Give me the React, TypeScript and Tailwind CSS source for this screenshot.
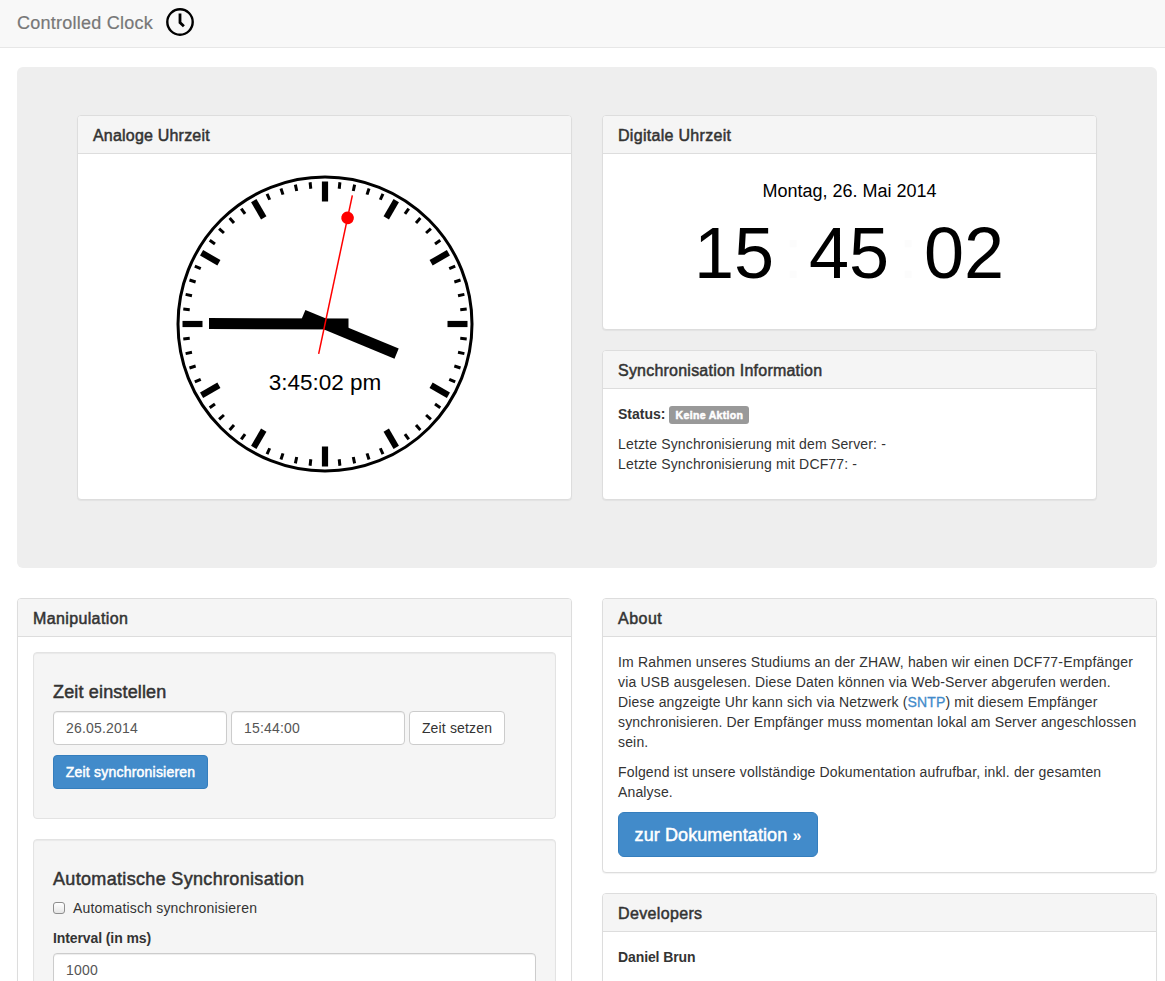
import type { ReactNode } from "react";

const MEDIUM = "[-webkit-text-stroke:0.5px_currentColor]";

function Panel({ title, tracking, className = "", children }: { title: string; tracking: string; className?: string; children: ReactNode }) {
  return (
    <section className={`flex flex-col rounded border border-[#ddd] bg-white shadow-[0_1px_1px_rgba(0,0,0,0.05)] ${className}`}>
      <header className="h-[38px] shrink-0 rounded-t-[3px] border-b border-[#ddd] bg-[#f5f5f5] px-[15px]">
        <h3 className={`text-base leading-[39px] ${MEDIUM} ${tracking}`}>{title}</h3>
      </header>
      {children}
    </section>
  );
}

function AnalogClock() {
  const ticks = Array.from({ length: 60 }, (_, i) => i);
  return (
    <svg className="tracking-normal" width="300" height="300" viewBox="-150 -150 300 300">
      <circle r="147" fill="#fff" stroke="#000" strokeWidth="3" />
      {ticks.map((i) => (
        <line
          key={i}
          y1={-142.5}
          y2={i % 5 === 0 ? -122.5 : -136}
          stroke="#000"
          strokeWidth={i % 5 === 0 ? 6.2 : 3}
          transform={`rotate(${i * 6})`}
        />
      ))}
      <text y="65.5" textAnchor="middle" fontSize="22.5" fill="#000">3:45:02 pm</text>
      <line y1="23.5" y2="-77.5" stroke="#000" strokeWidth="11" transform="rotate(112.5)" />
      <line y1="23.5" y2="-116" stroke="#000" strokeWidth="11" transform="rotate(270.2)" />
      <g transform="rotate(12)">
        <line y1="30.5" y2="-131.5" stroke="#f00" strokeWidth="1.5" />
        <circle cy="-108.5" r="6.3" fill="#f00" />
      </g>
    </svg>
  );
}

function Field({ value, className }: { value: string; className: string }) {
  return (
    <input
      readOnly
      value={value}
      className={`h-[34px] rounded border border-[#ccc] bg-white px-3 text-sm tracking-[0.18px] text-[#555] shadow-[inset_0_1px_1px_rgba(0,0,0,0.075)] outline-none ${className}`}
    />
  );
}

const WELL = "rounded border border-[#e3e3e3] bg-[#f5f5f5] px-[19px] pt-[19px] shadow-[inset_0_1px_1px_rgba(0,0,0,0.05)]";

export default function App() {
  return (
    <div className="h-[981px] w-[1165px] overflow-hidden bg-white font-['Liberation_Sans',Arial,sans-serif] text-sm leading-5 tracking-[0.16px] text-[#333]">
      <nav className="flex h-12 items-start border-b border-[#e7e7e7] bg-[#f8f8f8] pl-[17px]">
        <span className="w-[149px] whitespace-nowrap text-lg leading-[46px] tracking-[0.25px] text-[#777] [-webkit-text-stroke:0.2px_#777]">Controlled Clock</span>
        <svg className="mt-2" width="28" height="28" viewBox="0 0 28 28" fill="none" stroke="#000">
          <circle cx="14" cy="14" r="12.7" strokeWidth="2.4" />
          <path d="M14 5.5V14.6L17.9 18.3" strokeWidth="2.8" />
        </svg>
      </nav>

      <main className="pl-[17px] pr-2 pt-[19px]">
        <div className="flex h-[501px] gap-[30px] rounded-md bg-[#eee] px-[60px] pt-12">
          <Panel title="Analoge Uhrzeit" tracking="tracking-[0.2px]" className="h-[385px] w-[495px]">
            <div className="flex justify-center pt-5">
              <AnalogClock />
            </div>
          </Panel>
          <div className="flex w-[495px] flex-col gap-5">
            <Panel title="Digitale Uhrzeit" tracking="tracking-[0.3px]" className="h-[215px]">
              <div className="pt-[25px] text-center text-lg leading-6 tracking-normal text-black">Montag, 26. Mai 2014</div>
              <div className="flex pl-[91px] pt-[14px] text-[72px] leading-[72px] tracking-normal text-black">
                <span className="w-[89px]">15</span>
                <span className="w-[26px] text-[#fcfcfc]">:</span>
                <span className="w-[89px]">45</span>
                <span className="w-[26px] text-[#fcfcfc]">:</span>
                <span>02</span>
              </div>
            </Panel>
            <Panel title="Synchronisation Information" tracking="tracking-[0.22px]" className="h-[150px]">
              <div className="px-[15px] pt-[15px]">
                <p className="flex items-center gap-1">
                  <b className="tracking-normal">Status:</b>
                  <span className="mt-px flex h-[18px] w-20 items-center justify-center rounded-[3px] bg-[#999] text-[10.5px] font-bold tracking-[0.33px] text-white [-webkit-text-stroke:0.5px_#fff]">
                    Keine Aktion
                  </span>
                </p>
                <p className="mt-2.5">
                  Letzte Synchronisierung mit dem Server: -<br />
                  Letzte Synchronisierung mit DCF77: -
                </p>
              </div>
            </Panel>
          </div>
        </div>

        <div className="mt-[30px] flex items-start gap-[30px]">
          <Panel title="Manipulation" tracking="tracking-[0.37px]" className="w-[555px]">
            <div className="px-[15px] pt-[15px]">
              <div className={`h-[167px] ${WELL}`}>
                <h4 className={`mt-2.5 text-lg leading-5 ${MEDIUM}`}>Zeit einstellen</h4>
                <div className="mt-[9px] flex gap-1">
                  <Field value="26.05.2014" className="w-[174px]" />
                  <Field value="15:44:00" className="w-[174px]" />
                  <button className="h-[34px] w-24 rounded border border-[#ccc] bg-white">Zeit setzen</button>
                </div>
                <button className="mt-2.5 h-[34px] w-[155px] rounded border border-[#357ebd] bg-[#428bca] tracking-[0.22px] text-white [-webkit-text-stroke:0.5px_#fff]">
                  Zeit synchronisieren
                </button>
              </div>
              <div className={`mt-5 h-[200px] ${WELL}`}>
                <h4 className={`mt-2.5 text-lg leading-5 tracking-[0.33px] ${MEDIUM}`}>Automatische Synchronisation</h4>
                <label className="mt-[9px] flex items-center tracking-[0.19px]">
                  <span className="mr-2 h-3 w-3 rounded-[3px] border border-[#8e8e8e] bg-linear-to-b from-white to-[#e6e6e6]" />
                  Automatisch synchronisieren
                </label>
                <div className="mt-2.5 font-bold tracking-[-0.1px]">Interval (in ms)</div>
                <Field value="1000" className="mt-[5px] w-[483px]" />
              </div>
            </div>
          </Panel>

          <div className="flex w-[555px] flex-col gap-5">
            <Panel title="About" tracking="tracking-[0.5px]" className="h-[275px]">
              <div className="whitespace-nowrap px-[15px] pt-[15px]">
                <p>
                  Im Rahmen unseres Studiums an der ZHAW, haben wir einen DCF77-Empfänger<br />
                  via USB ausgelesen. Diese Daten können via Web-Server abgerufen werden.<br />
                  Diese angzeigte Uhr kann sich via Netzwerk (<a className="text-[#428bca] [-webkit-text-stroke:0.3px_#428bca]">SNTP</a>) mit diesem Empfänger<br />
                  synchronisieren. Der Empfänger muss momentan lokal am Server angeschlossen<br />
                  sein.
                </p>
                <p className="mt-2.5 tracking-[0.145px]">
                  Folgend ist unsere vollständige Dokumentation aufrufbar, inkl. der gesamten<br />
                  Analyse.
                </p>
                <button className="mt-2.5 h-[45px] w-[200px] rounded-md border border-[#357ebd] bg-[#428bca] text-lg tracking-[0.1px] text-white [-webkit-text-stroke:0.5px_#fff]">
                  zur Dokumentation <span className="text-base font-bold [-webkit-text-stroke:0]">»</span>
                </button>
              </div>
            </Panel>
            <Panel title="Developers" tracking="tracking-[0.35px]" className="h-[200px]">
              <div className="px-[15px] pt-[15px] font-bold tracking-[-0.1px]">Daniel Brun</div>
            </Panel>
          </div>
        </div>
      </main>
    </div>
  );
}
